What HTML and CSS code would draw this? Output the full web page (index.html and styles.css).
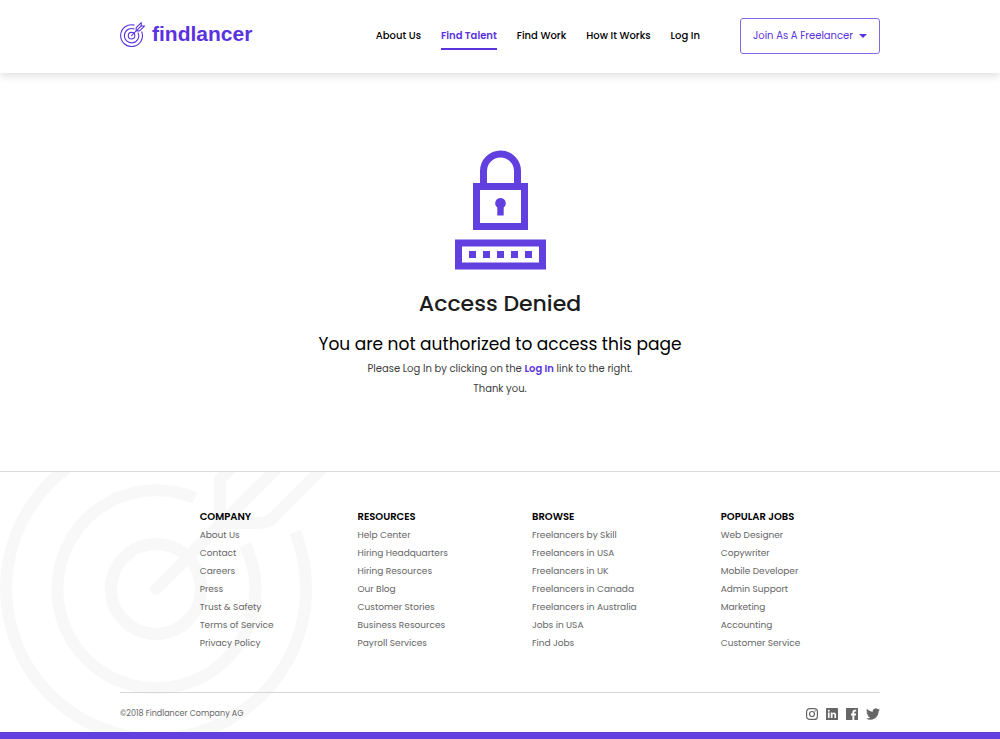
FILE: index.html
```html
<!DOCTYPE html>
<html lang="en">

<head>
    <meta charset="UTF-8">
    <meta name="viewport" content="width=device-width, initial-scale=1.0">
    <title>Findlancer - Access Denied</title>
    <link rel="stylesheet" href="styles.css">
</head>

<body>

    <!-- Target icon, shared by the logo and the footer background -->
    <svg class="sprite" width="0" height="0" aria-hidden="true">
        <symbol id="target" viewBox="0 -12 352 344">
            <g fill="none" stroke="currentColor">
                <path d="M295 119A150 150 0 1 1 196 31" />
                <path d="M245 132A99 99 0 1 1 195 85" />
                <circle cx="156" cy="176" r="45" />
                <path d="M156 176L290 42" stroke-linecap="round" />
                <path d="M220 112V66L290 -4V42H336L274 104Q268 110 260 110H222" stroke-linejoin="round" />
            </g>
        </symbol>
    </svg>

    <header class="header">
        <div class="container header-inner">
            <a href="#" class="logo">
                <svg class="logo-icon" aria-hidden="true"><use href="#target" /></svg>
                <span>findlancer</span>
            </a>
            <nav class="nav">
                <a href="#">About Us</a>
                <a href="#" class="active">Find Talent</a>
                <a href="#">Find Work</a>
                <a href="#">How It Works</a>
                <a href="#">Log In</a>
            </nav>
            <button type="button" class="join-btn">
                Join As A Freelancer
                <svg width="8" height="4" viewBox="0 0 8 4" aria-hidden="true"><path d="M0 0H8L4 4Z" fill="currentColor" /></svg>
            </button>
        </div>
    </header>

    <main class="main">
        <svg class="lock" width="92" height="120" viewBox="-1 0 92 120" aria-hidden="true">
            <g fill="none" stroke="currentColor">
                <path d="M28.500 34V21a17 17 0 0 1 34 0V34" stroke-width="7" />
                <rect x="21.500" y="36.500" width="48" height="40" stroke-width="7" />
                <rect x="3.500" y="93" width="84" height="23" stroke-width="7" />
            </g>
            <g fill="currentColor">
                <path d="M45.500 48a5.300 5.300 0 0 1 3.200 9.500V65.500H42.300V57.500A5.300 5.300 0 0 1 45.500 48Z" />
                <path d="M14 101h7v7h-7zM28 101h7v7h-7zM42 101h7v7h-7zM56 101h7v7h-7zM70 101h7v7h-7z" />
            </g>
        </svg>
        <h1>Access Denied</h1>
        <h2>You are not authorized to access this page</h2>
        <p>Please Log In by clicking on the <a href="#">Log In</a> link to the right.</p>
        <p>Thank you.</p>
    </main>

    <footer class="footer">
        <svg class="footer-bg" width="352" height="344" aria-hidden="true"><use href="#target" /></svg>

        <div class="container footer-inner">
            <div class="footer-links">
                <div class="footer-col">
                    <h3>COMPANY</h3>
                    <ul>
                        <li><a href="#">About Us</a></li>
                        <li><a href="#">Contact</a></li>
                        <li><a href="#">Careers</a></li>
                        <li><a href="#">Press</a></li>
                        <li><a href="#">Trust &amp; Safety</a></li>
                        <li><a href="#">Terms of Service</a></li>
                        <li><a href="#">Privacy Policy</a></li>
                    </ul>
                </div>
                <div class="footer-col">
                    <h3>RESOURCES</h3>
                    <ul>
                        <li><a href="#">Help Center</a></li>
                        <li><a href="#">Hiring Headquarters</a></li>
                        <li><a href="#">Hiring Resources</a></li>
                        <li><a href="#">Our Blog</a></li>
                        <li><a href="#">Customer Stories</a></li>
                        <li><a href="#">Business Resources</a></li>
                        <li><a href="#">Payroll Services</a></li>
                    </ul>
                </div>
                <div class="footer-col">
                    <h3>BROWSE</h3>
                    <ul>
                        <li><a href="#">Freelancers by Skill</a></li>
                        <li><a href="#">Freelancers in USA</a></li>
                        <li><a href="#">Freelancers in UK</a></li>
                        <li><a href="#">Freelancers in Canada</a></li>
                        <li><a href="#">Freelancers in Australia</a></li>
                        <li><a href="#">Jobs in USA</a></li>
                        <li><a href="#">Find Jobs</a></li>
                    </ul>
                </div>
                <div class="footer-col">
                    <h3>POPULAR JOBS</h3>
                    <ul>
                        <li><a href="#">Web Designer</a></li>
                        <li><a href="#">Copywriter</a></li>
                        <li><a href="#">Mobile Developer</a></li>
                        <li><a href="#">Admin Support</a></li>
                        <li><a href="#">Marketing</a></li>
                        <li><a href="#">Accounting</a></li>
                        <li><a href="#">Customer Service</a></li>
                    </ul>
                </div>
            </div>

            <div class="footer-bottom">
                <span>©2018 Findlancer Company AG</span>
                <div class="social">
                    <a href="#" aria-label="Instagram">
                        <svg width="12" height="12" viewBox="0 0 12 12">
                            <rect x=".6" y=".6" width="10.800" height="10.800" rx="3" fill="none" stroke="currentColor" stroke-width="1.200" />
                            <circle cx="6" cy="6" r="2.500" fill="none" stroke="currentColor" stroke-width="1.200" />
                            <circle cx="9.100" cy="2.900" r=".7" fill="currentColor" />
                        </svg>
                    </a>
                    <a href="#" aria-label="LinkedIn">
                        <svg width="12" height="12" viewBox="0 0 12 12">
                            <rect width="12" height="12" rx=".6" fill="currentColor" />
                            <path d="M1.900 4.600h1.700V10H1.900zM4.800 4.600h1.600v.8C7.300 4 10.100 4.200 10.100 6.900V10H8.400V7.200C8.400 5.400 6.500 5.500 6.500 7.200V10H4.800z" fill="#fff" />
                            <circle cx="2.750" cy="2.800" r="1" fill="#fff" />
                        </svg>
                    </a>
                    <a href="#" aria-label="Facebook">
                        <svg width="12" height="12" viewBox="0 0 12 12">
                            <rect width="12" height="12" rx=".6" fill="currentColor" />
                            <path d="M6.400 12V7.400H5V5.600h1.400V4.300C6.400 2.700 7.300 1.800 8.800 1.800h1.400v1.800H9.200c-.7 0-.9.300-.9.900v1.100h1.900l-.3 1.800H8.300V12z" fill="#fff" />
                        </svg>
                    </a>
                    <a href="#" aria-label="Twitter">
                        <svg width="14" height="12" viewBox="0 2 24 20">
                            <path d="M23.950 4.570a10 10 0 0 1-2.820.77 4.960 4.960 0 0 0 2.160-2.720c-.95.550-2 .95-3.130 1.180a4.920 4.920 0 0 0-8.380 4.480C7.690 8.090 4.070 6.130 1.640 3.160a4.820 4.820 0 0 0-.67 2.480c0 1.710.87 3.210 2.190 4.090a4.900 4.900 0 0 1-2.230-.61v.06a4.920 4.920 0 0 0 3.950 4.830 5 5 0 0 1-2.210.08 4.940 4.940 0 0 0 4.600 3.420A9.870 9.870 0 0 1 0 19.540a13.990 13.990 0 0 0 7.550 2.210c9.050 0 14-7.500 14-13.980 0-.21 0-.42-.02-.63a9.940 9.940 0 0 0 2.420-2.570z" fill="currentColor" />
                        </svg>
                    </a>
                </div>
            </div>
        </div>
    </footer>

</body>

</html>
```

FILE: styles.css
```css
body {
    font-family: Poppins, Inter, sans-serif;
    margin: 0;
    background-color: #fff;
    color: #000;
    min-height: 100vh;
    display: flex;
    flex-direction: column;
}

a {
    color: inherit;
    text-decoration: none;
}

.sprite {
    position: absolute;
}

.container {
    width: 76%;
    margin: 0 auto;
}

.header {
    padding: 18px 0 19px;
    box-shadow: 0 3px 8px rgba(0, 0, 0, 0.12);
}

.header-inner {
    display: flex;
    align-items: center;
}

.logo {
    display: flex;
    align-items: center;
    gap: 6px;
    margin-right: auto;
    padding-bottom: 4px;
    color: #5a32e0;
    font-family: "Liberation Sans", Arial, sans-serif;
    font-size: 21px;
    font-weight: 700;
}

.logo-icon {
    width: 26px;
    height: 25px;
    stroke-width: 15px;
}

.nav {
    display: flex;
    gap: 20px;
    margin-right: 40px;
    font-size: 10px;
    font-weight: 500;
    line-height: 20px;
}

.nav a {
    padding: 3px 0 2px;
    border-bottom: 2px solid transparent;
}

.nav .active {
    color: #5a32e0;
    border-color: #5a32e0;
    font-weight: 600;
}

.join-btn {
    display: flex;
    align-items: center;
    gap: 6px;
    height: 36px;
    padding: 0 12px;
    background: #fff;
    border: 1px solid #8468ea;
    border-radius: 3px;
    color: #5a32e0;
    font-family: inherit;
    font-size: 10px;
    cursor: pointer;
}

.main {
    flex: 1;
    display: flex;
    flex-direction: column;
    align-items: center;
    padding: 77px 0 72px;
    text-align: center;
}

.lock {
    color: #6240e0;
}

.main h1 {
    margin: 18px 0 0;
    color: #1c1c1c;
    font-size: 22px;
    font-weight: 500;
    line-height: 32px;
}

.main h2 {
    margin: 12px 0 3px;
    font-size: 17px;
    font-weight: 400;
    line-height: 24px;
}

.main p {
    margin: 0;
    color: #3c3c3c;
    font-size: 10px;
    line-height: 20px;
}

.main p a {
    color: #5a32e0;
    font-weight: 600;
}

.footer {
    position: relative;
    overflow: hidden;
    border-top: 1px solid #dcdcdc;
    border-bottom: 7px solid #6240e0;
}

/* Faded target behind the links */
.footer-bg {
    position: absolute;
    left: 0;
    top: -71px;
    color: #f8f8f8;
    stroke-width: 12px;
}

.footer-inner {
    position: relative;
}

.footer-links {
    display: flex;
    justify-content: center;
    gap: 84px;
    padding: 36px 0 40px;
    font-size: 9px;
    line-height: 18px;
}

.footer-col h3 {
    margin: 0;
    font-size: 10px;
    font-weight: 600;
    line-height: 18px;
}

.footer-col ul {
    list-style: none;
    margin: 0;
    padding: 0;
    color: #666;
}

.footer-bottom {
    display: flex;
    justify-content: space-between;
    align-items: center;
    height: 36px;
    padding-top: 3px;
    border-top: 1px solid #d8d8d8;
    color: #666;
    font-size: 8px;
}

.social {
    display: flex;
    gap: 8px;
}

.social svg {
    display: block;
}
```
